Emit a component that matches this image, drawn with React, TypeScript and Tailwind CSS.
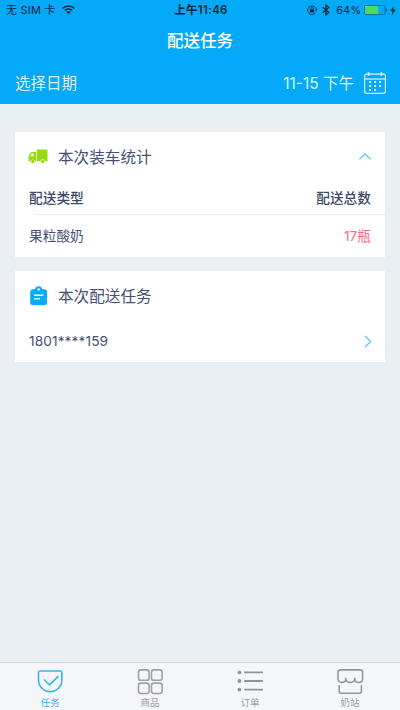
import type { ReactNode } from 'react';

function WifiIcon() {
  return (
    <svg width="13" height="10" viewBox="0 0 13 10" fill="none" stroke="#0b2536" strokeWidth="1.6">
      <path d="M0.7 3.4C4 0.2 9 0.2 12.3 3.4" />
      <path d="M2.7 5.5C4.8 3.5 8.2 3.5 10.3 5.5" />
      <path d="M6.5 9L4.3 6.8C5.5 5.7 7.5 5.7 8.7 6.8Z" fill="#0b2536" stroke="none" />
    </svg>
  );
}

function LockIcon() {
  return (
    <svg width="11" height="10" viewBox="0 0 11 10" fill="none" stroke="#0b3550" strokeWidth="0.9">
      <path d="M8.6 7.6A4.3 4.3 0 1 1 9.3 4.6" />
      <path d="M7.9 4.4H10.7L9.3 6.2Z" fill="#0b3550" stroke="none" />
      <rect x="2.9" y="4.3" width="4.2" height="3.1" fill="#0b2536" stroke="none" />
      <path d="M3.9 4.6V3.5a1.1 1.1 0 0 1 2.2 0V4.6" />
    </svg>
  );
}

function BluetoothIcon() {
  return (
    <svg width="8" height="12" viewBox="0 0 8 12" fill="none" stroke="#0b2536" strokeWidth="1.2">
      <path d="M0.8 3.2L6.8 8.6L4 11V1L6.8 3.4L0.8 8.8" />
    </svg>
  );
}

function BatteryIcon() {
  return (
    <svg width="24" height="10" viewBox="0 0 24 10">
      <rect x="0.5" y="0.5" width="20.5" height="9" rx="1.3" fill="none" stroke="#12638f" strokeWidth="0.8" />
      <rect x="1" y="1" width="13.2" height="8" rx="0.5" fill="#4bd964" />
      <path d="M22 3.4C23.4 3.8 23.4 6.2 22 6.6Z" fill="#12496b" />
    </svg>
  );
}

function CalendarIcon() {
  return (
    <svg width="22" height="22" viewBox="0 0 22 22" fill="none" stroke="#d9f2ff" strokeWidth="1.2">
      <rect x="0.6" y="2.1" width="20.8" height="19.2" rx="2" />
      <path d="M0.6 7H21.4" />
      <path d="M4.6 0.3V3.8M17.4 0.3V3.8" strokeWidth="1.8" />
      <path d="M5.1 10H7.1M10.1 10H12.1M15.1 10H17.1M5.1 14H7.1M10.1 14H12.1M15.1 14H17.1M5.1 18H7.1M10.1 18H12.1" strokeWidth="2" />
    </svg>
  );
}

function TruckIcon() {
  return (
    <svg width="20" height="15" viewBox="0 0 20 15" fill="#95db12">
      <path d="M9 0.5H18.9Q19.5 0.5 19.5 1.1V12.2H17.3A2.7 2.7 0 0 0 12.1 12.2H9Z" />
      <path fillRule="evenodd" d="M4 2.9H8.2V12.2H7.2A2.5 2.5 0 0 0 2.4 12.2H0.6V7.4L2.3 3.9Q2.8 2.9 4 2.9ZM3.8 4.4L2.3 7.3H5.7V4.4Z" />
      <circle cx="4.8" cy="12.5" r="1.8" />
      <circle cx="14.7" cy="12.5" r="1.8" />
    </svg>
  );
}

function ClipboardIcon() {
  return (
    <svg width="18" height="20" viewBox="0 0 18 20">
      <rect x="0.2" y="3.2" width="16.8" height="16.1" rx="3" fill="#07acf7" />
      <path d="M4 6V3.2H5A3.7 3.7 0 0 1 12.2 3.2H13.4V6Z" fill="#07acf7" />
      <circle cx="8.6" cy="3.4" r="1.2" fill="white" />
      <path d="M4 9.2H13.3M4 12.9H10" stroke="white" strokeWidth="1.4" />
    </svg>
  );
}

function TaskIcon() {
  return (
    <svg width="26" height="26" viewBox="0 0 26 26" fill="none" stroke="#35b5f0" strokeWidth="1.6" strokeLinecap="round" strokeLinejoin="round">
      <path d="M3 2H23.4Q24.9 2 24.9 3.5V10.7C24.9 17.5 19.7 22.6 13.2 22.6S1.5 17.5 1.5 10.7V3.5Q1.5 2 3 2Z" />
      <path d="M7.5 11L12.4 15.8L20.9 7.6" />
    </svg>
  );
}

function GoodsIcon() {
  return (
    <svg width="26" height="26" viewBox="0 0 26 26" fill="none" stroke="#a0a0a1" strokeWidth="1.6">
      <rect x="1.5" y="0.9" width="10.6" height="10.4" rx="2.4" />
      <rect x="14.5" y="0.9" width="10.6" height="10.4" rx="2.4" />
      <rect x="1.5" y="14.1" width="10.6" height="10.4" rx="2.4" />
      <rect x="14.5" y="14.1" width="10.6" height="10.4" rx="2.4" />
    </svg>
  );
}

function OrderIcon() {
  return (
    <svg width="26" height="26" viewBox="0 0 26 26" fill="#929394" stroke="#929394" strokeWidth="1.9" strokeLinecap="round">
      <path d="M8 3.4H25.2M8 12H25.2M8 20.6H25.2" />
      <g stroke="none">
        <circle cx="2.4" cy="3.4" r="1.9" />
        <circle cx="2.4" cy="12" r="1.9" />
        <circle cx="2.4" cy="20.6" r="1.9" />
      </g>
    </svg>
  );
}

function StationIcon() {
  return (
    <svg width="28" height="26" viewBox="0 0 28 26" fill="none" stroke="#969697" strokeWidth="1.6" strokeLinecap="round" strokeLinejoin="round">
      <path d="M4.3 0.9H24.3Q26.6 0.9 26.6 3V10C26.6 12.1 24.9 13.4 22.8 13.4C20.6 13.4 18.7 12 18.7 9.4C18.7 12 16.6 13.4 14.3 13.4S9.9 12 9.9 9.4C9.9 12 8 13.4 5.8 13.4C3.7 13.4 2 12.1 2 10V3Q2 0.9 4.3 0.9Z" />
      <path d="M3.2 16.8V22.3Q3.2 24.3 5.2 24.3H23.4Q25.4 24.3 25.4 22.3V16.8" />
    </svg>
  );
}

interface TabProps {
  icon: ReactNode;
  label: string;
  active?: boolean;
}

function Tab({ icon, label, active }: TabProps) {
  return (
    <div className={`flex flex-1 flex-col items-center pt-1.5 text-[9.5px] leading-[15px] ${active ? 'text-[#35b5f0]' : 'text-[#9b9c9e]'}`}>
      <div className="h-[28px]">{icon}</div>
      <span>{label}</span>
    </div>
  );
}

export default function App() {
  return (
    <div className="flex h-[710px] w-[400px] flex-col overflow-hidden bg-[#e9eff3] font-['Inter','Noto_Sans_CJK_SC',sans-serif] text-[#465072]">
      <header className="h-[104px] bg-[#04a9f7]">
        <div className="grid h-5 grid-cols-[1fr_auto_1fr] items-center pl-1.5 pr-1 text-[11px] leading-5 text-[#0b2536]">
          <div className="flex items-center gap-[6px]">
            <span className="whitespace-nowrap tracking-[0.2px]">无 SIM 卡</span>
            <WifiIcon />
          </div>
          <span className="text-[11.5px] font-semibold tracking-[0.3px]">上午11:46</span>
          <div className="flex items-center justify-end">
            <LockIcon />
            <span className="ml-1 mr-[6px]"><BluetoothIcon /></span>
            <span className="mr-[3px]">64%</span>
            <BatteryIcon />
            <svg className="ml-[2px]" width="6" height="9" viewBox="0 0 6 9" fill="#0b2536">
              <path d="M3.8 0L0.3 5H2.6L1.9 9L5.7 3.7H3.3Z" />
            </svg>
          </div>
        </div>
        <h1 className="h-[42px] text-center text-[16.5px] font-medium leading-[43px] text-white">配送任务</h1>
        <div className="flex h-[42px] items-center justify-between pl-[15px] pr-[14px] text-[15.5px] text-[#def3fe]">
          <span className="pt-0.5">选择日期</span>
          <div className="flex items-center gap-[10px]">
            <span className="pt-0.5">11-15 下午</span>
            <CalendarIcon />
          </div>
        </div>
      </header>

      <main className="flex flex-1 flex-col gap-[14px] px-[15px] pt-7">
        <section className="h-[125px] bg-white">
          <div className="flex h-[49px] items-center pl-[13px] pr-[14px]">
            <TruckIcon />
            <h2 className="ml-[10px] flex-1 pt-0.5 text-[15.6px]">本次装车统计</h2>
            <svg width="13" height="8" viewBox="0 0 13 8" fill="none" stroke="#55c4f6" strokeWidth="1.2">
              <path d="M1.4 6.3L7 1.1L12.6 6.3" />
            </svg>
          </div>
          <div className="flex h-[33px] items-center justify-between px-[14px] pt-0.5 text-[13.7px] font-medium text-[#3d4768]">
            <span>配送类型</span>
            <span>配送总数</span>
          </div>
          <div className="ml-5 flex h-[43px] items-center justify-between border-t border-[#ebecee] pr-[14px] text-[13.7px]">
            <span className="-ml-1.5">果粒酸奶</span>
            <span className="text-[#fb6a8a]">17瓶</span>
          </div>
        </section>

        <section className="h-[91px] bg-white">
          <div className="flex h-[49px] items-center pl-[15px]">
            <ClipboardIcon />
            <h2 className="ml-[10px] pt-0.5 text-[15.6px]">本次配送任务</h2>
          </div>
          <div className="flex h-[41px] items-center justify-between pl-[14px] pr-[13px] pt-px text-[13.7px]">
            <span className="tracking-[0.1px]">1801****159</span>
            <svg width="8" height="13" viewBox="0 0 8 13" fill="none" stroke="#55c4f6" strokeWidth="1.3">
              <path d="M1 0.9L6.6 6.5L1 12.1" />
            </svg>
          </div>
        </section>
      </main>

      <nav className="flex h-12 border-t border-[#cbd7df] bg-[#f4f6f9]">
        <Tab icon={<TaskIcon />} label="任务" active />
        <Tab icon={<GoodsIcon />} label="商品" />
        <Tab icon={<OrderIcon />} label="订单" />
        <Tab icon={<StationIcon />} label="奶站" />
      </nav>
    </div>
  );
}
